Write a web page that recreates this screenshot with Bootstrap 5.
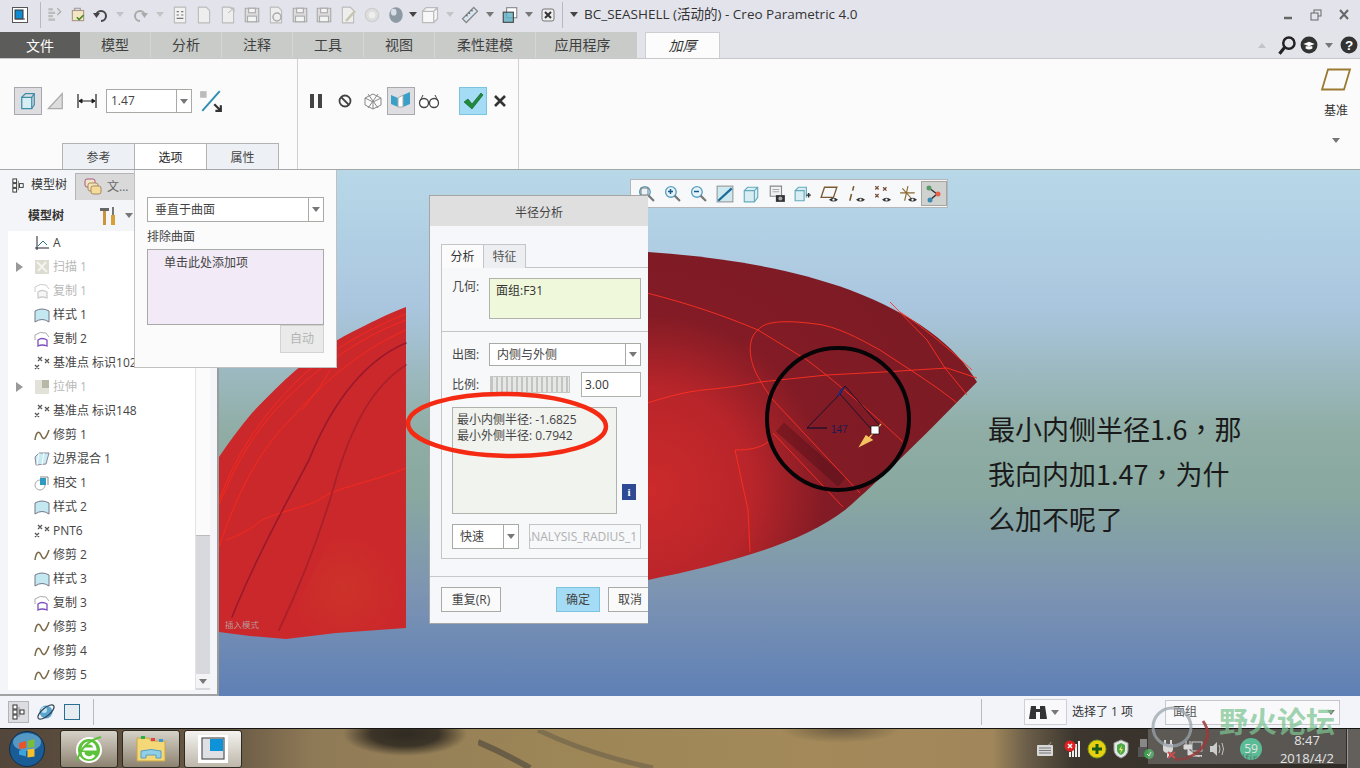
<!DOCTYPE html>
<html lang="zh">
<head>
<meta charset="utf-8">
<title>Creo Parametric 4.0</title>
<link rel="stylesheet" href="https://cdn.jsdelivr.net/npm/bootstrap@5.3.0/dist/css/bootstrap.min.css">
<style>
html,body{margin:0;height:768px;overflow:hidden}
body{font-family:"Open Sans","Noto Sans CJK SC",sans-serif;font-size:12px;color:#333;background:#e4e4ec}
.cr-app{width:1360px;height:768px;position:relative;overflow:hidden}
.cr-title{height:32px;background:#e3e3ec;padding:0 0 3px 12px;flex:none}
.cr-title svg{display:block}
.sl{display:flex;align-items:center;justify-content:center;flex:none;height:24px}
.w10{width:10px}.w12{width:12px}.w14{width:14px}.w16{width:16px}.w22{width:22px}.w24{width:24px}.w26{width:26px}.w28{width:28px}
.w36{width:36px;justify-content:flex-end;padding-right:3px}
.cr-sep{width:1px;height:26px;background:#b8b8c0;flex:none}
.cr-sep1{margin:0 1px 0 12px}
.cr-sep2{margin:0 0 0 2px}
.cr-caret{width:0;height:0;border-left:4px solid transparent;border-right:4px solid transparent;border-top:5px solid #777;flex:none}
.cr-caret.dim{border-top-color:#c4c4c8}
.cr-caret.dark{border-top-color:#444}
.cr-caret.up{transform:rotate(180deg)}
.cr-doc{font-size:13.5px;color:#333;margin-left:3px;white-space:nowrap}
.cr-win{margin-left:auto;padding-right:9px;gap:14px}
.cr-tabs{height:26px;background:#e3e3ea;flex:none}
.cr-file{width:80px;background:#5c5c5a;color:#fff;font-size:14px;display:flex;align-items:center;justify-content:center}
.cr-strip{width:557px;background:#c9cbc8;display:flex;align-items:center}
.cr-t{font-size:14px;color:#3f3f3f;text-align:center;flex:none;height:100%;line-height:26px;border-right:1px solid #d4d6d2}
.t70{width:71px}.t86{width:101px}.t100{width:93px}
.cr-act{margin-left:8px;width:75px;background:#fcfcfd;border:1px solid #cdcdd2;border-bottom:0;font-size:14px;font-style:italic;text-align:center;line-height:25px;color:#333}
.cr-help{margin-left:auto;padding-right:2px;gap:3px}
.cr-ribbon{height:112px;background:#fbfbfc;border-top:1px solid #c7c7cc;border-bottom:1px solid #a5a6a8;flex:none}
.rb-a{width:298px;border-right:1px solid #cfcfd4;padding:28px 0 0 14px;position:relative;flex:none;height:100%}
.rb-b{width:221px;border-right:1px solid #cfcfd4;padding:28px 0 0 7px;flex:none;height:100%}
.rb-c{flex:1}
.rb-d{width:48px;flex:none;text-align:center;padding-top:9px}
.rb-d .lbl{font-size:12px;margin-top:12px;line-height:16px}
.rb-d .cr-caret{margin:19px auto 0}
.pbtn{width:28px;height:28px;border:1px solid #a9a9ad;background:#dedee2;display:flex;align-items:center;justify-content:center;flex:none}
.nbtn{height:28px;display:flex;align-items:center;justify-content:center;flex:none}
.okbtn{background:#a5dcf5;border-color:#7cc4de}
.rb-input{width:86px;height:24px;border:1px solid #a8aaa6;background:#fff;display:flex;margin:0 7px 0 0;flex:none}
.rb-input .v{flex:1;padding:0 4px;line-height:22px;font-size:12px;color:#444}
.rb-input .d{width:15px;border-left:1px solid #a8aaa6;display:flex;align-items:center;justify-content:center}
.rb-subtabs{position:absolute;left:62px;bottom:0;display:flex;height:26px}
.rb-st{width:73px;text-align:center;line-height:28px;font-size:12px;border:1px solid #b2b4b2;border-bottom:0;background:#edf0f4;margin-right:-1px;color:#444}
.rb-st.on{background:#fff;color:#222}
.cr-main{height:526px;flex:none;position:relative}
.cr-left{width:219px;flex:none;background:#f3f5f8;border-right:2px solid #9a9c9c;border-bottom:2px solid #a0a2a4;height:100%}
.lf-top{height:30px;flex:none}
.lf-tab1{width:75px;display:flex;align-items:center;padding-left:11px;gap:5px;font-size:12px;color:#333}
.lf-tab2{width:60px;margin-top:3px;background:#d9d9da;border:1px solid #b5b5b5;border-bottom:0;display:flex;align-items:center;padding-left:8px;gap:5px;color:#666}
.lf-bar{height:31px;flex:none;padding-left:28px;font-weight:700;color:#333;gap:0}
.lf-hammer{margin-left:35px}
.lf-body{height:459px;margin-left:8px;flex:none}
.lf-tree{width:187px;background:#fff;padding:0}
.lf-tree .list-group-item{background:transparent;border:0;padding:0;height:24px;display:flex;align-items:center;font-size:12px;color:#444;white-space:nowrap;overflow:hidden}
.lf-tree .off{color:#b8b8b8}
.ar{width:22px;flex:none;display:flex;justify-content:center}
.ar i{display:block;width:0;height:0;border-top:5px solid transparent;border-bottom:5px solid transparent;border-left:7px solid #999;margin-left:0}
.ti{width:23px;flex:none;display:flex;justify-content:center}
.lf-sb{width:15px;background:#d7d9dd;display:flex;flex-direction:column;border-left:1px solid #e3e3e6}
.lf-th{height:305px;background:#fbfbfc;border-bottom:1px solid #bbb;flex:none}
.lf-dn{margin-top:auto;margin-bottom:2px;height:14px;background:#f4f4f6;display:flex;align-items:center;justify-content:center}
.cr-canvas{flex:1;height:100%;position:relative;overflow:hidden}
.cr-canvas svg{display:block}
.cr-fly{position:absolute;left:134px;top:0;width:203px;height:198px;background:#fbfbfc;border:1px solid #c0c0c0;border-top:0;padding:27px 12px 0 12px}
.sel{height:25px;border:1px solid #a8aaa6;background:#fff;display:flex;font-size:12px;color:#444}
.sel .v{flex:1;padding-left:7px;line-height:23px;white-space:nowrap}
.sel .d{width:15px;border-left:1px solid #a8aaa6;display:flex;align-items:center;justify-content:center;flex:none}
.fy-lb{margin-top:6px;line-height:17px;color:#444}
.fy-list{height:76px;border:1px solid #a8aaa6;background:#f2ebf7;padding:4px 0 0 16px;margin-top:4px;color:#444}
.fy-btn{width:44px;height:28px;background:#e9eae9;border:1px solid #d2d2d2;margin-left:auto;color:#b4b4b4;font-size:12px;text-align:center;line-height:26px;display:block;padding:0;border-radius:0}
.cr-dlg{position:absolute;left:429px;top:25px;width:219px;height:429px;background:#f6f7fa;border:1px solid #a4a6a6;border-right:0;overflow:hidden;display:flex;flex-direction:column}
.dg-head{height:30px;background:#dfdfdf;text-align:center;line-height:34px;font-size:12px;color:#444;flex:none}
.dg-body{padding:18px 0 0 11px;height:333px;flex:none}
.dg-tabs{height:24px;display:flex}
.dg-tab{width:43px;height:24px;border:1px solid #c4c6c6;border-bottom:0;background:#eceef2;text-align:center;line-height:24px;color:#555;margin-right:-1px}
.dg-tab.on{background:#fbfbfc;color:#333;width:43px}
.dg-pane{width:230px;height:292px;border:1px solid #c4c6c6;margin-top:-1px;background:#f7f8fa}
.dg-g{padding:10px 0 0 10px;height:64px;display:flex;border-bottom:1px solid #c4c6c6}
.dg-l{width:37px;flex:none;line-height:18px;color:#444}
.dg-geo{width:152px;height:41px;background:#f0f8dc;border:1px solid #b0b2ae;padding:3px 6px;color:#333}
.dg-r{padding-left:10px}
.dg-r1{margin-top:11px;height:23px}
.dg-r1 .sel{width:152px;height:23px}
.dg-r1 .sel .v{line-height:21px;padding-left:7px}
.dg-r2{margin-top:6px;height:25px}
.dg-slide{width:80px;height:17px;margin-left:1px;flex:none;background:repeating-linear-gradient(90deg,#c3c5c2 0 2px,#e6e7e6 2px 5px);border:1px solid #c4c6c2}
.dg-num{width:60px;height:25px;border:1px solid #b0b2ae;background:#fff;margin-left:11px;padding-left:3px;line-height:23px;color:#333}
.dg-out{width:165px;height:107px;margin-top:10px;border:1px solid #b0b2ae;background:#f1f3ef;padding:4px;line-height:16px;color:#444;font-size:12px;flex:none;white-space:nowrap}
.dg-info{width:14px;height:16px;background:#2f4a94;color:#fff;font:700 11px "Liberation Serif",serif;text-align:center;line-height:16px;margin:87px 0 0 5px;flex:none}
.dg-r4{margin-top:10px;height:25px}
.dg-r4 .sel{width:67px;height:25px}
.dg-name{width:112px;height:25px;margin-left:10px;border:1px solid #c4c6c6;background:#f7f8fa;color:#b0b0b0;line-height:23px;overflow:hidden;white-space:nowrap;direction:rtl;text-align:right;padding:0 3px}
.dg-foot{height:47px;margin-top:17px;border-top:1px solid #c8c8cc;padding:10px 0 0 11px;gap:0;flex:none;width:230px}
.dg-b{height:25px;width:60px;border:1px solid #a8aaa6;background:#fafafa;font-size:12px;color:#444;border-radius:0;padding:0;flex:none;line-height:23px}
.dg-b.ok{width:44px;margin-left:55px;background:#a5dcf5;border-color:#7cc4de}
.dg-b.no{width:44px;margin-left:8px}
.cr-mini{position:absolute;left:630px;top:9px;width:318px;height:29px;background:#f7f8fa;border:1px solid #b4b6b8;padding-left:2px;display:flex;align-items:center}
.cr-mini .m{width:26.2px;height:25px;flex:none;display:flex;align-items:center;justify-content:center}
.cr-mini .m.on{background:#d0d2d0;border:1px solid #a4a6a4}
.cr-note{position:absolute;left:988px;top:236px;width:270px;font-size:27px;line-height:45px;color:#1a1a1a;font-family:"Noto Sans CJK SC",sans-serif}
.cr-comma{font-family:"Noto Sans CJK TC",sans-serif}
.cr-anno{position:absolute;left:0;top:0;pointer-events:none}
.cr-status{height:32px;flex:none;background:#f2f4f9;padding-left:8px;position:relative}
.st-press{width:21px;height:22px;background:#dcdde0;border:1px solid #b4b4b6;display:flex;align-items:center;justify-content:center;flex:none}
.st-rt{margin-left:auto;height:100%;padding-right:20px}
.st-bin{width:43px;height:26px;border:1px solid #d0d0d4;background:#f9f9fb;display:flex;align-items:center;flex:none;margin-left:42px}
.st-txt{margin-left:5px}
.st-sel{width:175px;height:25px;border:1px solid #c8c8cc;display:flex;align-items:center;padding-left:7px;color:#555;margin-left:32px;flex:none;background:#f9f9fb}
.cr-task{height:40px;flex:none;background:radial-gradient(ellipse 62px 22px at 405px 5px,#2f2a22 0,#3c3428 55%,rgba(70,60,46,0) 100%),radial-gradient(ellipse 60px 14px at 840px 0,rgba(70,60,50,.6) 0,rgba(70,60,50,0) 100%),linear-gradient(90deg,#53463a 0,#6a5a45 17%,#8f7a57 23%,#9c8556 40%,#a48a5a 60%,#a0865a 73%,#6b5e49 75.5%,#3c362e 79%,#2f2b26 100%);border-top:1px solid #141414;padding-left:9px;position:relative}
.tk-orb{width:36px;height:36px;flex:none;margin-right:15px}
.tk-btn{width:58px;height:38px;border:1px solid #2e2a24;border-radius:3px;background:linear-gradient(180deg,#d6d2c8,#8d8270);display:flex;align-items:center;justify-content:center;flex:none;margin-right:4px}
.tk-btn.act{background:linear-gradient(180deg,#f4f3f0,#bdb7aa)}
.tk-streak{width:150px;height:38px;margin-left:232px;flex:none}
.tk-streak svg{display:block}
.tk-tray{margin-left:auto;height:100%;gap:0;color:#fff}
.tk-i{width:24px;display:flex;justify-content:center;flex:none}
.tk-num{width:22px;height:22px;border-radius:50%;background:#35c48c;color:#fff;font-size:12px;text-align:center;line-height:22px;flex:none;margin-left:11px}
.tk-clock{width:74px;text-align:center;font-size:13px;line-height:18px;color:#fff;margin-left:8px;flex:none}
.tk-show{width:13px;height:100%;background:rgba(255,255,255,.25);border-left:1px solid #999;margin-left:3px;flex:none}
.wm-block{position:absolute;left:1148px;top:729px;width:198px;height:35px;background:rgba(170,170,170,.33)}
.wm-url{position:absolute;left:1178px;top:750px;font-size:11px;letter-spacing:.5px;color:rgba(90,90,90,.7)}
.wm-txt{position:absolute;left:1219px;top:702px;font:700 29px/36px "Noto Sans CJK SC",sans-serif;color:rgba(125,195,145,.72);white-space:nowrap}
.wm-rings{position:absolute;left:1145px;top:695px}
</style>
</head>
<body>
<svg width="0" height="0" class="d-block position-absolute">
<defs>
<symbol id="i-wave" viewBox="0 0 16 16"><path d="M1 13C2 5 5 3 7 8s4 6 8-5" fill="none" stroke="#7a6a4a" stroke-width="1.500"/></symbol>
<symbol id="i-style" viewBox="0 0 16 16"><path d="M1 15V4Q8 0 15 4V15Q8 10 1 15Z" fill="#c4e8f2" stroke="#778" stroke-width="1"/></symbol>
<symbol id="i-copy" viewBox="0 0 16 16"><path d="M1 9V4Q6 0 12 2l3 4" fill="none" stroke="#aaa"/><path d="M4 15V9Q8 6 13 9v6Q8 13 4 15Z" fill="#fff" stroke="#7a4fc0" stroke-width="1.300"/></symbol>
<symbol id="i-copyd" viewBox="0 0 16 16"><path d="M1 9V4Q6 0 12 2l3 4" fill="none" stroke="#ccc"/><path d="M4 15V9Q8 6 13 9v6Q8 13 4 15Z" fill="#f6f6f6" stroke="#ccc" stroke-width="1.300"/></symbol>
<symbol id="i-pts" viewBox="0 0 16 16"><path d="M1 10l4 4m0-4l-4 4M4 2l4 4m0-4L4 6M11 4l4 4m0-4l-4 4" stroke="#555" stroke-width="1.300"/></symbol>
<symbol id="i-tree" viewBox="0 0 16 16"><path d="M8 3v10M8 8h3" stroke="#888" fill="none"/><rect x="2" y="1" width="4" height="4" fill="#fff" stroke="#333"/><rect x="2" y="6" width="4" height="4" fill="#fff" stroke="#333"/><rect x="2" y="11" width="4" height="4" fill="#fff" stroke="#333"/><rect x="9" y="6" width="4" height="4" fill="#fff" stroke="#333"/></symbol>
<symbol id="i-page" viewBox="0 0 16 16"><path d="M3 1h7l3 3v11H3Z" fill="#eee" stroke="#bbb"/></symbol>
<symbol id="i-disk" viewBox="0 0 16 16"><path d="M2 2h12v12H2Z" fill="#ddd" stroke="#aaa"/><rect x="5" y="2" width="6" height="4" fill="#f4f4f4" stroke="#aaa"/><rect x="4" y="9" width="8" height="5" fill="#f4f4f4" stroke="#aaa"/></symbol>
<symbol id="i-box" viewBox="0 0 16 16"><path d="M2 5h9v9H2ZM2 5l3-3h9v9l-3 3M11 5l3-3" fill="#fff" fill-opacity=".7" stroke="#bbb"/></symbol>
<symbol id="i-mag" viewBox="0 0 16 16"><circle cx="6.500" cy="6.500" r="5" fill="#e8f4fa" stroke="#5aa0c0" stroke-width="1.300"/><path d="M10 10l5 5" stroke="#777" stroke-width="2"/></symbol>
<symbol id="i-eye" viewBox="0 0 8 5"><path d="M0 2.500Q4-1 8 2.500 4 6 0 2.500Z" fill="#333"/><circle cx="4" cy="2.500" r="1" fill="#fff"/></symbol>
</defs>
</svg>

<div class="cr-app d-flex flex-column">

<!-- title bar -->
<div class="cr-title d-flex align-items-center">
<span class="sl w16"><svg width="16" height="16" viewBox="0 0 16 16"><rect x=".5" y=".5" width="15" height="15" fill="#fff" stroke="#555"/><rect x="3" y="3" width="8" height="9" fill="#0f8bd0" stroke="#333"/><path d="M3 12h10" stroke="#555"/></svg></span>
<span class="cr-sep cr-sep1"></span>
<span class="sl w24"><svg width="18" height="18" viewBox="0 0 16 16"><path d="M3 3h4M3 6h6M3 9h4M3 12h6" stroke="#bbb" stroke-width="2"/><path d="M11 2l3 3-3 3" fill="#ddd" stroke="#aaa"/></svg></span>
<span class="sl w24"><svg width="18" height="18" viewBox="0 0 16 16"><rect x="3" y="4" width="10" height="9" fill="#f3e6c2" stroke="#a98"/><path d="M5 4V2h5v2" fill="none" stroke="#999"/><path d="M7 10l2 2 4-4" stroke="#4a8a2a" fill="none" stroke-width="1.500"/></svg></span>
<span class="sl w22"><svg width="18" height="16" viewBox="0 0 16 16"><path d="M3 9a5 5 0 1 1 5 5" fill="none" stroke="#444" stroke-width="2"/><path d="M0 6l3.500 5L7 6Z" fill="#444"/></svg></span>
<span class="sl w16"><i class="cr-caret dim"></i></span>
<span class="sl w24"><svg width="18" height="16" viewBox="0 0 16 16"><path d="M13 9a5 5 0 1 0-5 5" fill="none" stroke="#aaa" stroke-width="2"/><path d="M16 6l-3.500 5L9 6Z" fill="#aaa"/></svg></span>
<span class="sl w16"><i class="cr-caret dim"></i></span>
<span class="sl w24"><svg width="18" height="18" viewBox="0 0 16 16"><path d="M3 1h10v14H3Z" fill="#f2f2f2" stroke="#bbb"/><path d="M5 5h2M9 5h2M5 8h2M9 8h2M5 11h6" stroke="#777"/></svg></span>
<span class="sl w24"><svg width="18" height="18"><use href="#i-page"/></svg></span>
<span class="sl w24"><svg width="18" height="18"><use href="#i-page"/><path d="M9 7l6-5M15 2h-4M15 2v4" stroke="#bbb" fill="none"/></svg></span>
<span class="sl w24"><svg width="18" height="18"><use href="#i-disk"/></svg></span>
<span class="sl w24"><svg width="18" height="18"><use href="#i-page"/><circle cx="10" cy="11" r="4" fill="none" stroke="#aaa" stroke-width="1.500"/></svg></span>
<span class="sl w24"><svg width="18" height="18"><use href="#i-disk"/></svg></span>
<span class="sl w24"><svg width="18" height="18"><use href="#i-disk"/></svg></span>
<span class="sl w24"><svg width="18" height="18"><use href="#i-page"/><path d="M7 15L16 5" stroke="#c6c6b0" stroke-width="2.500"/></svg></span>
<span class="sl w24"><svg width="18" height="18" viewBox="0 0 16 16"><circle cx="8" cy="8" r="6" fill="#ddd" stroke="#ccc"/><circle cx="8" cy="8" r="3" fill="#eee"/></svg></span>
<span class="sl w24"><svg width="18" height="20" viewBox="0 0 16 16"><ellipse cx="8" cy="8" rx="6" ry="7" fill="#8d9aa6"/><ellipse cx="6" cy="5.500" rx="2.500" ry="3" fill="#d8dee4"/></svg></span>
<span class="sl w10"><i class="cr-caret dark"></i></span>
<span class="sl w24"><svg width="20" height="20"><use href="#i-box"/></svg></span>
<span class="sl w16"><i class="cr-caret dim"></i></span>
<span class="sl w24"><svg width="20" height="20" viewBox="0 0 16 16"><path d="M2 11L11 2l3 3-9 9Z" fill="#d7e6f0" stroke="#888"/><path d="M5 8l1 1m1-3l1 1m1-3l1 1" stroke="#666"/></svg></span>
<span class="sl w16"><i class="cr-caret"></i></span>
<span class="sl w24"><svg width="18" height="18" viewBox="0 0 16 16"><rect x="5" y="1.500" width="9" height="9" fill="#fff" stroke="#888"/><rect x="2" y="5.500" width="9" height="9" fill="#5cb0c4" fill-opacity=".8" stroke="#444"/></svg></span>
<span class="sl w14"><i class="cr-caret"></i></span>
<span class="sl w24"><svg width="14" height="14" viewBox="0 0 14 14"><rect x="1" y="1" width="12" height="12" rx="2" fill="#eee" stroke="#777"/><path d="M4 4l6 6m0-6l-6 6" stroke="#333" stroke-width="2"/></svg></span>
<span class="cr-sep cr-sep2"></span>
<span class="sl w14 ms-1"><i class="cr-caret dark"></i></span>
<span class="cr-doc">BC_SEASHELL (活动的) - Creo Parametric 4.0</span>
<span class="d-flex align-items-center cr-win">
<svg width="14" height="12" viewBox="0 0 14 12"><path d="M3 9h8" stroke="#666" stroke-width="2.500"/></svg>
<svg width="14" height="12" viewBox="0 0 14 12"><rect x="5" y="1" width="7" height="6" fill="none" stroke="#666"/><rect x="2" y="4" width="7" height="7" fill="#e3e3ec" stroke="#666"/></svg>
<svg width="14" height="12" viewBox="0 0 14 12"><path d="M3 1l8 9m0-9l-8 9" stroke="#666" stroke-width="2"/></svg>
</span>
</div>

<!-- ribbon tabs -->
<div class="cr-tabs d-flex">
<div class="cr-file">文件</div>
<div class="cr-strip">
<span class="cr-t t70">模型</span><span class="cr-t t70">分析</span><span class="cr-t t70">注释</span><span class="cr-t t70">工具</span><span class="cr-t t70">视图</span><span class="cr-t t86">柔性建模</span><span class="cr-t t100 border-0">应用程序</span>
</div>
<div class="cr-act">加厚</div>
<div class="d-flex align-items-center cr-help">
<i class="cr-caret dim up"></i>
<svg class="ms-2" width="20" height="20" viewBox="0 0 16 16"><circle cx="9.500" cy="6.500" r="4.500" fill="none" stroke="#222" stroke-width="2"/><path d="M6 10l-4 5" stroke="#222" stroke-width="2.500"/></svg>
<svg width="18" height="18" viewBox="0 0 16 16"><circle cx="8" cy="8" r="7.500" fill="#333"/><path d="M3 7l5-2 5 2-5 2Z" fill="#fff"/><path d="M5 9v2q3 2 6 0V9" fill="#fff"/></svg>
<i class="cr-caret ms-1"></i>
<svg class="ms-1" width="18" height="18" viewBox="0 0 16 16"><circle cx="8" cy="8" r="7.500" fill="#333"/><text x="8" y="12.500" font-size="12" font-weight="700" text-anchor="middle" fill="#fff" font-family="Liberation Sans">?</text></svg>
</div>
</div>

<!-- ribbon -->
<div class="cr-ribbon d-flex">
<div class="rb-a">
<div class="d-flex align-items-center">
<span class="pbtn"><svg width="20" height="20" viewBox="0 0 16 16"><path d="M3 5h8v9H3Z" fill="#d7edf4" stroke="#3d8ea8"/><path d="M3 5l3-3h7v9l-2 3M11 5l2-3" fill="none" stroke="#3d8ea8"/></svg></span>
<span class="nbtn w28"><svg width="20" height="20" viewBox="0 0 16 16"><path d="M2 14L13 2v12Z" fill="#ddd" stroke="#aaa"/></svg></span>
<span class="nbtn w36"><svg width="20" height="20" viewBox="0 0 20 20"><path d="M1 3v14M19 3v14" stroke="#222" stroke-width="1.200"/><path d="M2 10h16M2 10l3-2v4ZM18 10l-3-2v4Z" stroke="#222"/></svg></span>
<span class="rb-input"><span class="v">1.47</span><span class="d"><i class="cr-caret"></i></span></span>
<svg width="24" height="24" viewBox="0 0 22 22"><path d="M3 20L19 2" stroke="#2f8fb0" stroke-width="1.800"/><path d="M1 2h6v6H1Z" fill="#bbb" stroke="none"/><path d="M14 14l6 6m0-5v5h-5" stroke="#333" stroke-width="2" fill="none"/></svg>
</div>
<div class="rb-subtabs"><span class="rb-st">参考</span><span class="rb-st on">选项</span><span class="rb-st">属性</span></div>
</div>
<div class="rb-b d-flex align-items-start">
<span class="nbtn w22"><svg width="14" height="16" viewBox="0 0 14 16"><path d="M1 1h4v14H1ZM9 1h4v14H9Z" fill="#444"/></svg></span>
<span class="nbtn w28 ms-1"><svg width="16" height="16" viewBox="0 0 16 16"><circle cx="8" cy="8" r="5.500" fill="none" stroke="#444" stroke-width="1.800"/><path d="M4 4l8 8" stroke="#444" stroke-width="1.800"/></svg></span>
<span class="nbtn w28"><svg width="20" height="20" viewBox="0 0 20 20"><path d="M2 7l8-4 8 4-8 4ZM2 7v7l8 4 8-4V7M10 11v7M5 3l10 14M15 3L5 17" fill="none" stroke="#888"/></svg></span>
<span class="pbtn"><svg width="22" height="18" viewBox="0 0 22 18"><path d="M1 3l7 3v9l-7-3ZM13 3l7-3v12l-7 3Z" fill="#3aa0c8"/><path d="M8 6l5-3v12l-5-0Z" fill="#fff" stroke="#aaa"/></svg></span>
<span class="nbtn w28"><svg width="22" height="16" viewBox="0 0 22 16"><circle cx="6" cy="10" r="4.500" fill="#fff" stroke="#444" stroke-width="1.300"/><circle cx="16" cy="10" r="4.500" fill="#fff" stroke="#444" stroke-width="1.300"/><path d="M10 9h2M2 8l3-6M20 8l-3-6" stroke="#444"/></svg></span>
<span class="pbtn okbtn ms-3"><svg width="22" height="20" viewBox="0 0 22 20"><path d="M2 11l4-3 4 5L19 2l2 2L10 18Z" fill="#1f8a3a" stroke="#0f5a24" stroke-width=".6"/></svg></span>
<span class="nbtn w26"><svg width="12" height="12" viewBox="0 0 12 12"><path d="M1 1l10 10m0-10L1 11" stroke="#333" stroke-width="2.600"/></svg></span>
</div>
<div class="rb-c"></div>
<div class="rb-d">
<svg width="32" height="23" viewBox="0 0 32 23"><path d="M8 1.500H30L24 21.500H2Z" fill="none" stroke="#9a7a30" stroke-width="1.800"/></svg>
<div class="lbl">基准</div>
<i class="cr-caret d-block"></i>
</div>
</div>

<!-- main -->
<div class="cr-main d-flex">
<div class="cr-left d-flex flex-column">
<div class="lf-top d-flex">
<div class="lf-tab1"><svg width="15" height="17"><use href="#i-tree"/></svg>模型树</div>
<div class="lf-tab2"><svg width="18" height="18" viewBox="0 0 18 18"><rect x="1" y="1" width="10" height="8" rx="2" fill="#efe4c4" stroke="#a58"/><rect x="4" y="5" width="10" height="8" rx="2" fill="#f2e2b4" stroke="#a86"/><rect x="7" y="8" width="10" height="8" rx="2" fill="#f3dc9a" stroke="#a86"/></svg>文...</div>
</div>
<div class="lf-bar d-flex align-items-center">
<span>模型树</span>
<svg class="lf-hammer" width="18" height="20" viewBox="0 0 18 20"><path d="M1 2h9v3H1Z" fill="#666"/><rect x="4" y="5" width="3" height="14" fill="#c9933f"/><rect x="13" y="1" width="2" height="8" fill="#777"/><rect x="12" y="9" width="4" height="10" fill="#d8a034"/></svg>
<i class="cr-caret ms-2"></i>
</div>
<div class="lf-body d-flex">
<ul class="list-group list-group-flush lf-tree">
<li class="list-group-item"><span class="ar"></span><span class="ti"><svg width="16" height="16" viewBox="0 0 16 16"><path d="M3 1v14M1 13h14" stroke="#223" fill="none"/><path d="M4 11l5-5 4 4" stroke="#26708e" fill="none"/></svg></span><span>A</span></li>
<li class="list-group-item off"><span class="ar"><i></i></span><span class="ti"><svg width="16" height="16" viewBox="0 0 16 16"><rect x="1" y="1" width="14" height="14" fill="#dcdcd0"/><path d="M3 3l10 10M12 3L4 12" stroke="#f4f4f0" stroke-width="2"/></svg></span><span>扫描 1</span></li>
<li class="list-group-item off"><span class="ar"></span><span class="ti"><svg width="16" height="16"><use href="#i-copyd"/></svg></span><span>复制 1</span></li>
<li class="list-group-item"><span class="ar"></span><span class="ti"><svg width="16" height="16"><use href="#i-style"/></svg></span><span>样式 1</span></li>
<li class="list-group-item"><span class="ar"></span><span class="ti"><svg width="16" height="16"><use href="#i-copy"/></svg></span><span>复制 2</span></li>
<li class="list-group-item"><span class="ar"></span><span class="ti"><svg width="16" height="16"><use href="#i-pts"/></svg></span><span>基准点 标识102</span></li>
<li class="list-group-item off"><span class="ar"><i></i></span><span class="ti"><svg width="16" height="16" viewBox="0 0 16 16"><rect x="1" y="1" width="14" height="14" fill="#e2e2d8"/><rect x="8" y="1" width="7" height="8" fill="#b8b8a8"/></svg></span><span>拉伸 1</span></li>
<li class="list-group-item"><span class="ar"></span><span class="ti"><svg width="16" height="16"><use href="#i-pts"/></svg></span><span>基准点 标识148</span></li>
<li class="list-group-item"><span class="ar"></span><span class="ti"><svg width="16" height="16"><use href="#i-wave"/></svg></span><span>修剪 1</span></li>
<li class="list-group-item"><span class="ar"></span><span class="ti"><svg width="16" height="16" viewBox="0 0 16 16"><path d="M1 6l4-4h10l-3 11-10 1Z" fill="#c8eaf2" stroke="#889"/><path d="M5 2l-2 12M10 2l-2 12" stroke="#fff"/></svg></span><span>边界混合 1</span></li>
<li class="list-group-item"><span class="ar"></span><span class="ti"><svg width="16" height="16" viewBox="0 0 16 16"><circle cx="6" cy="10" r="5" fill="none" stroke="#aaa"/><path d="M6 3h6v7H6Z" fill="#2f9ac0"/><path d="M6 2h8v8" fill="none" stroke="#888"/></svg></span><span>相交 1</span></li>
<li class="list-group-item"><span class="ar"></span><span class="ti"><svg width="16" height="16"><use href="#i-style"/></svg></span><span>样式 2</span></li>
<li class="list-group-item"><span class="ar"></span><span class="ti"><svg width="16" height="16"><use href="#i-pts"/></svg></span><span>PNT6</span></li>
<li class="list-group-item"><span class="ar"></span><span class="ti"><svg width="16" height="16"><use href="#i-wave"/></svg></span><span>修剪 2</span></li>
<li class="list-group-item"><span class="ar"></span><span class="ti"><svg width="16" height="16"><use href="#i-style"/></svg></span><span>样式 3</span></li>
<li class="list-group-item"><span class="ar"></span><span class="ti"><svg width="16" height="16"><use href="#i-copy"/></svg></span><span>复制 3</span></li>
<li class="list-group-item"><span class="ar"></span><span class="ti"><svg width="16" height="16"><use href="#i-wave"/></svg></span><span>修剪 3</span></li>
<li class="list-group-item"><span class="ar"></span><span class="ti"><svg width="16" height="16"><use href="#i-wave"/></svg></span><span>修剪 4</span></li>
<li class="list-group-item"><span class="ar"></span><span class="ti"><svg width="16" height="16"><use href="#i-wave"/></svg></span><span>修剪 5</span></li>
</ul>
<div class="lf-sb"><div class="lf-th"></div><div class="lf-dn"><i class="cr-caret"></i></div></div>
</div>
</div>

<div class="cr-canvas">
<svg width="1141" height="526" viewBox="219 170 1141 526">
<defs>
<linearGradient id="bg" x1="0" y1="0" x2="0" y2="1"><stop offset="0" stop-color="#b8d8e8"/><stop offset=".26" stop-color="#aac6df"/><stop offset=".5" stop-color="#8fada4"/><stop offset=".62" stop-color="#88a8a0"/><stop offset=".8" stop-color="#7d94b2"/><stop offset="1" stop-color="#5f80b6"/></linearGradient>
<radialGradient id="rs" gradientUnits="userSpaceOnUse" cx="650" cy="490" r="320"><stop offset="0" stop-color="#cc2a2b"/><stop offset=".32" stop-color="#b8252a"/><stop offset=".55" stop-color="#821b25"/><stop offset="1" stop-color="#7c1b24"/></radialGradient>
<radialGradient id="ph" gradientUnits="userSpaceOnUse" cx="345" cy="590" r="55"><stop offset="0" stop-color="#d04a24" stop-opacity=".3"/><stop offset="1" stop-color="#d04a24" stop-opacity="0"/></radialGradient>
</defs>
<rect x="219" y="170" width="1141" height="526" fill="url(#bg)"/>
<path d="M406 307C385 315 370 323 352 332 330 343 312 357 296 370 280 384 265 399 252 413 240 427 229 442 219 457V632L250 636 286 639 336 633 406 628Z" fill="#cb282b"/>
<path d="M280 640L340 520 406 500V628L336 633Z" fill="url(#ph)"/>
<g fill="none" stroke="#ff2a1a" stroke-width=".8">
<path d="M406 314C370 328 330 350 300 378 265 412 238 450 219 500"/>
<path d="M406 320C365 335 320 365 285 400 255 430 235 465 219 505"/>
<path d="M406 330C360 350 320 385 290 420 255 455 235 500 219 547"/>
<path d="M330 370C322 385 310 400 302 410"/>
<path d="M226 540C240 535 250 530 262 520 285 510 305 507 319 500 332 488 380 480 406 468"/>
</g>
<g fill="none" stroke-linecap="round">
<path d="M406 343C370 358 335 395 309 460 285 505 255 560 232 617" stroke="#87142c" stroke-width="1.600" opacity=".75"/>
<path d="M406 365C375 385 352 420 332 493 318 540 298 590 279 630" stroke="#8f1a2a" stroke-width="1.800" opacity=".55"/>
</g>
<path d="M648 252C720 257 790 268 850 290 915 315 955 345 977 382 930 430 880 480 845 510 800 545 720 565 648 580Z" fill="url(#rs)"/>
<path d="M780 427L842 482" stroke="#3c0a14" stroke-width="12" opacity=".32"/>
<g fill="none" stroke="#ff3020" stroke-width=".9">
<path d="M647 293C690 304 725 316 758 330L807 360C840 385 880 420 903 442"/>
<path d="M758 330C765 320 790 320 823 325 845 330 865 342 880 350 910 370 935 385 957 403"/>
<path d="M647 403C670 396 685 392 703 390 725 388 745 385 760 382L827 375 883 372 947 368 977 378"/>
<path d="M758 330C745 340 750 365 760 380 765 390 770 395 773 400L860 493"/>
<path d="M768 442C760 448 750 450 735 450L748 510 750 552"/>
<path d="M773 433L843 507"/>
<path d="M890 302L927 340 945 368 967 395M900 312C920 325 945 345 972 370"/>
</g>
<text x="225" y="628" font-size="8.500" fill="#b99898" font-family="Noto Sans CJK SC">插入模式</text>
<circle cx="838" cy="419" r="71" fill="none" stroke="#050508" stroke-width="4"/>
<g stroke="#101030" fill="none" stroke-width=".9">
<path d="M807 428L840 394 845 386 880 426M840 394L872 430"/>
<path d="M807 428H827" stroke-width="1.200"/>
<path d="M843 388L838 396" stroke="#1a2a80" stroke-width="2"/>
</g>
<text x="831" y="433" font-size="10" fill="#1a1a55" font-family="Liberation Sans">147</text>
<path d="M860 446L866 436 872 440Z M869 438L881 424" fill="#f6c560" stroke="#f6c560" stroke-width="1.300"/>
<rect x="871" y="426" width="8" height="8" fill="#fff" stroke="#111" stroke-width=".7"/>
</svg>
</div>

<div class="cr-fly">
<div class="sel"><span class="v">垂直于曲面</span><span class="d"><i class="cr-caret"></i></span></div>
<div class="fy-lb">排除曲面</div>
<div class="fy-list">单击此处添加项</div>
<button class="btn fy-btn" type="button">自动</button>
</div>

<div class="cr-mini">
<span class="m"><svg width="17" height="17"><use href="#i-mag"/><rect x="3" y="3" width="7" height="7" fill="none" stroke="#777"/></svg></span>
<span class="m"><svg width="17" height="17"><use href="#i-mag"/><path d="M4 6.500h5M6.500 4v5" stroke="#1a5a8a" stroke-width="1.500"/></svg></span>
<span class="m"><svg width="17" height="17"><use href="#i-mag"/><path d="M4 6.500h5" stroke="#1a5a8a" stroke-width="1.500"/></svg></span>
<span class="m"><svg width="18" height="18" viewBox="0 0 16 16"><rect x="1" y="1" width="14" height="14" fill="#cde8ef" stroke="#999"/><path d="M2 14L14 3" stroke="#1a6a9a" stroke-width="2"/></svg></span>
<span class="m"><svg width="18" height="18" viewBox="0 0 16 16"><path d="M2 5h9v10H2ZM2 5l3-3h9v9l-3 4M11 5l3-3" fill="#d8eef4" stroke="#6ab"/></svg></span>
<span class="m"><svg width="18" height="18" viewBox="0 0 16 16"><path d="M2 1h10v9H2Z" fill="#f2f2f2" stroke="#888"/><path d="M4 4h6M4 6h6" stroke="#aaa"/><rect x="7" y="9" width="8" height="6" fill="#333"/><circle cx="11" cy="12" r="1.800" fill="#aaa"/></svg></span>
<span class="m"><svg width="18" height="18" viewBox="0 0 16 16"><path d="M1 5h8v9H1ZM1 5l3-3h7v9" fill="#d8eef4" stroke="#6ab"/><path d="M11 9h4M13 7v4" stroke="#333" stroke-width="1.300"/></svg></span>
<span class="m"><svg width="18" height="18" viewBox="0 0 16 16"><path d="M4 2h11l-3 9H1Z" fill="none" stroke="#7a5a30" stroke-width="1.200"/><use href="#i-eye" x="8" y="10.500" width="8" height="5"/></svg></span>
<span class="m"><svg width="18" height="18" viewBox="0 0 16 16"><path d="M6 1L5 5M4 8L2.500 14" stroke="#7a5a30" stroke-width="1.400"/><use href="#i-eye" x="8" y="10.500" width="8" height="5"/></svg></span>
<span class="m"><svg width="18" height="18" viewBox="0 0 16 16"><path d="M2 1l3 3m0-3L2 4M9 2l3 3m0-3L9 5M2 8l3 3m0-3l-3 3" stroke="#7a4a30" stroke-width="1.100"/><use href="#i-eye" x="8" y="10.500" width="8" height="5"/></svg></span>
<span class="m"><svg width="18" height="18" viewBox="0 0 16 16"><path d="M8 1L5 14M1 7h13M3 3l8 9" stroke="#8a6a30"/><use href="#i-eye" x="8" y="10.500" width="8" height="5"/></svg></span>
<span class="m on"><svg width="20" height="20" viewBox="0 0 20 20"><path d="M5 4l8 6-7 6" fill="none" stroke="#333" stroke-width="1.500"/><circle cx="5" cy="4" r="2.500" fill="#5a9a6a"/><circle cx="14" cy="10" r="2.500" fill="#e8604a"/><circle cx="6" cy="16" r="2.500" fill="#3a8ab0"/></svg></span>
</div>

<div class="cr-dlg">
<div class="dg-head">半径分析</div>
<div class="dg-body">
<div class="dg-tabs"><span class="dg-tab on">分析</span><span class="dg-tab">特征</span></div>
<div class="dg-pane">
<div class="dg-g"><span class="dg-l">几何:</span><div class="dg-geo">面组:F31</div></div>
<div class="dg-r dg-r1 d-flex align-items-center"><span class="dg-l">出图:</span><div class="sel"><span class="v">内侧与外侧</span><span class="d"><i class="cr-caret"></i></span></div></div>
<div class="dg-r dg-r2 d-flex align-items-center"><span class="dg-l">比例:</span><span class="dg-slide"></span><span class="dg-num">3.00</span></div>
<div class="dg-r d-flex align-items-start"><div class="dg-out">最小内侧半径: -1.6825<br>最小外侧半径: 0.7942</div><span class="dg-info">i</span></div>
<div class="dg-r dg-r4 d-flex"><div class="sel"><span class="v">快速</span><span class="d"><i class="cr-caret"></i></span></div><div class="dg-name">ANALYSIS_RADIUS_1</div></div>
</div>
</div>
<div class="dg-foot d-flex">
<button class="btn dg-b" type="button">重复(R)</button>
<button class="btn dg-b ok" type="button">确定</button>
<button class="btn dg-b no" type="button">取消</button>
</div>
</div>

<div class="cr-note">最小内侧半径1.6<span class="cr-comma" lang="zh-Hant">，</span>那<br>我向内加1.47<span class="cr-comma" lang="zh-Hant">，</span>为什<br>么加不呢了</div>
<svg class="cr-anno" width="1360" height="526" viewBox="0 170 1360 526"><ellipse cx="507" cy="425" rx="99" ry="31" transform="rotate(1 507 425)" fill="none" stroke="#f42a12" stroke-width="4.500"/></svg>
</div>

<!-- status bar -->
<div class="cr-status d-flex align-items-center">
<span class="st-press"><svg width="16" height="18"><use href="#i-tree"/></svg></span>
<span class="sl w26 ms-1"><svg width="20" height="20" viewBox="0 0 20 20"><ellipse cx="10" cy="10" rx="6.500" ry="6.500" fill="#5aa5d0"/><ellipse cx="8" cy="8" rx="3" ry="3" fill="#bfe0ee"/><ellipse cx="10" cy="10" rx="10" ry="4" transform="rotate(-40 10 10)" fill="none" stroke="#345" stroke-width="1.200"/></svg></span>
<span class="sl w26"><svg width="16" height="16" viewBox="0 0 16 16"><rect x=".5" y=".5" width="15" height="15" fill="#e6ecf0" stroke="#2a6f92"/></svg></span>
<span class="cr-sep ms-2"></span>
<div class="st-rt d-flex align-items-center">
<span class="cr-sep"></span>
<div class="st-bin"><span class="sl w26"><svg width="20" height="18" viewBox="0 0 20 18"><path d="M3 3h5v3h4V3h5l2 13h-7V9H8v7H1Z" fill="#333"/></svg></span><i class="cr-caret"></i></div>
<span class="st-txt">选择了 1 项</span>
<div class="st-sel"><span>面组</span><i class="cr-caret ms-auto me-1"></i></div>
</div>
</div>

<!-- taskbar -->
<div class="cr-task d-flex align-items-center">
<span class="tk-orb"><svg width="36" height="36" viewBox="0 0 36 36"><circle cx="18" cy="18" r="17.500" fill="#1a5d96" stroke="#0f2e4c"/><ellipse cx="18" cy="11" rx="14" ry="9" fill="#7fc0e2" opacity=".6"/><path d="M10 12l7-2v7l-7 1Z" fill="#e8532a"/><path d="M18.500 10l7-2v8l-7 1Z" fill="#7cba3a"/><path d="M10 19.500l7-1v7l-7-2Z" fill="#3aa5dc"/><path d="M18.500 18.500l7-1v8l-7 1Z" fill="#f6c02a"/></svg></span>
<span class="tk-btn"><svg width="30" height="30" viewBox="0 0 30 30"><circle cx="15" cy="16" r="12" fill="#5cc23a" stroke="#fff" stroke-width="2"/><path d="M9 15h12a6 6 0 0 0-12 0Zm0 3a6 6 0 0 0 11 3" fill="none" stroke="#fff" stroke-width="3"/><path d="M3 27Q8 8 27 3" fill="none" stroke="#5cc23a" stroke-width="2"/></svg></span>
<span class="tk-btn"><svg width="32" height="30" viewBox="0 0 32 30"><path d="M2 4h12l2 3h14v20H2Z" fill="#f4d776" stroke="#c9a644"/><rect x="6" y="2" width="4" height="3" fill="#2ab04a"/><rect x="16" y="4" width="4" height="3" fill="#d44"/><rect x="24" y="5" width="4" height="3" fill="#3a9ad8"/><path d="M6 24v-7q10-3 20 0v7h-5v-3H11v3Z" fill="#8fcfe8" stroke="#5a9ec0"/></svg></span>
<span class="tk-btn act"><svg width="32" height="30" viewBox="0 0 32 30"><rect x="1" y="1" width="30" height="28" fill="#fff"/><rect x="5" y="4" width="22" height="21" fill="#dfe0e4" stroke="#555" stroke-width="1.200"/><rect x="13" y="5" width="13" height="12" fill="#0f93d8"/></svg></span>
<span class="tk-streak"><svg width="230" height="38" viewBox="0 0 230 38"><path d="M0 12Q28 24 52 38" fill="none" stroke="#4a443c" stroke-width="6" opacity=".6"/><path d="M60 0Q110 24 175 38" fill="none" stroke="#5c5444" stroke-width="5" opacity=".45"/></svg></span>
<div class="tk-tray d-flex align-items-center">
<span class="tk-i me-1"><svg width="18" height="16" viewBox="0 0 18 16"><rect x="1" y="4" width="16" height="11" rx="1" fill="#d8d8d8"/><path d="M3 7h12M3 9.500h12M3 12h12" stroke="#777"/><path d="M12 4q3-1 3-3" stroke="#999" fill="none"/></svg></span>
<span class="tk-i"><svg width="18" height="20" viewBox="0 0 18 20"><path d="M6 18v-5M9 18V9M12 18V5M15 18V2" stroke="#eee" stroke-width="2"/><circle cx="6" cy="7" r="5.500" fill="#e02020"/><path d="M4 5l4 4m0-4l-4 4" stroke="#fff" stroke-width="1.500"/></svg></span>
<span class="tk-i"><svg width="20" height="20" viewBox="0 0 20 20"><circle cx="10" cy="10" r="9" fill="#e8d010" stroke="#7a9a1a"/><path d="M10 5v10M5 10h10" stroke="#1a5a1a" stroke-width="3"/></svg></span>
<span class="tk-i"><svg width="18" height="20" viewBox="0 0 18 20"><path d="M9 1l7 3v7q0 5-7 8-7-3-7-8V4Z" fill="#e4e8e4" stroke="#999"/><path d="M9 4l4 2v5q0 3-4 5-4-2-4-5V6Z" fill="#4ea84a"/><path d="M10 6l-3 5h2l-1 4 3-5H9Z" fill="#f2e860"/></svg></span>
<span class="tk-i"><svg width="18" height="22" viewBox="0 0 18 22"><rect x="4" y="1" width="7" height="14" fill="#888"/><rect x="2" y="9" width="9" height="10" fill="#555"/><circle cx="13" cy="16" r="5" fill="#3aa04a"/><path d="M11 16l2 2 2-4" stroke="#fff" fill="none"/></svg></span>
<span class="tk-i"><svg width="18" height="22" viewBox="0 0 18 22"><path d="M5 2v4M11 2v4" stroke="#eee" stroke-width="2"/><path d="M3 6h10v5q0 4-5 4t-5-4Z" fill="#eee"/><path d="M8 15v5" stroke="#eee" stroke-width="2"/><path d="M8 14l7 6m0-6l-7 6" stroke="#e02020" stroke-width="2"/></svg></span>
<span class="tk-i"><svg width="22" height="20" viewBox="0 0 22 20"><path d="M4 2v4M8 2v4M2 6h8v4H2ZM6 10v6h8" fill="#eee" stroke="#eee"/><rect x="10" y="3" width="10" height="9" fill="#333" stroke="#ddd"/><path d="M10 17h10" stroke="#ddd" stroke-width="2"/></svg></span>
<span class="tk-i"><svg width="18" height="18" viewBox="0 0 18 18"><path d="M2 6h3l4-4v14l-4-4H2Z" fill="#ddd"/><path d="M11 5q2 4 0 8M14 3q3 6 0 12" stroke="#ccc" fill="none"/></svg></span>
<span class="tk-num">59</span>
<div class="tk-clock">8:47<br>2018/4/2</div>
<span class="tk-show"></span>
</div>
</div>

<div class="wm-block"></div>
<svg class="wm-rings" width="90" height="73" viewBox="0 0 90 73"><circle cx="27" cy="32" r="19" fill="none" stroke="#9aa4ac" stroke-width="3" opacity=".75"/><path d="M58 26q10 14-2 28-12 12-26 10" fill="none" stroke="#9a3a3a" stroke-width="3" opacity=".85"/></svg>
<span class="wm-url">www.bewildfire.cn</span>
<span class="wm-txt">野火论坛</span>

</div>
<script src="https://cdn.jsdelivr.net/npm/bootstrap@5.3.0/dist/js/bootstrap.bundle.min.js"></script>
</body>
</html>
